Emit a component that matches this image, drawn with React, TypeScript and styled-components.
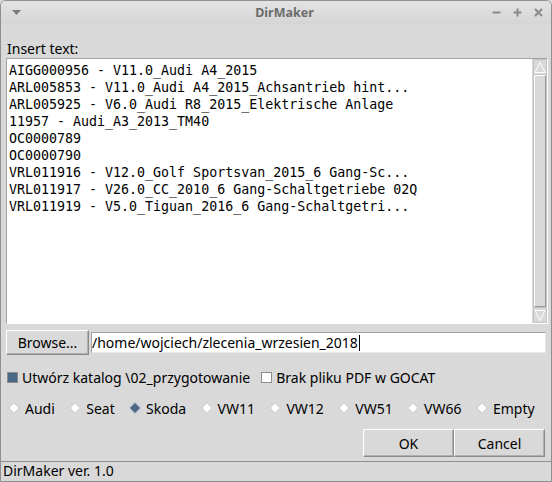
import React from "react";
import styled, { createGlobalStyle } from "styled-components";

const Global = createGlobalStyle`
  html, body { margin: 0; padding: 0; background: #d9d9d9; }
  body { width: 552px; height: 482px; overflow: hidden; }
`;

const UI = `"Noto Sans", "DejaVu Sans", sans-serif`;

const Window = styled.div`
  width: 552px;
  height: 482px;
  box-sizing: border-box;
  border: 1px solid #8f8f8f;
  border-radius: 6px 6px 0 0;
  overflow: hidden;
  display: flex;
  flex-direction: column;
  background: #d9d9d9;
  font-family: ${UI};
  font-size: 14px;
  color: #000;
`;

const TitleBar = styled.div`
  height: 23px;
  flex: none;
  display: grid;
  grid-template-columns: 1fr auto 1fr;
  align-items: center;
  background: linear-gradient(#e3e3e3, #d5d5d5);
  padding: 0 8px 0 11px;
`;

const Title = styled.div`
  font-family: ${UI};
  font-weight: bold;
  font-size: 12.5px;
  color: #6c6c6c;
  padding-left: 14px;
`;

const TitleButtons = styled.div`
  display: flex;
  justify-content: flex-end;
  align-items: center;
  gap: 12px;
`;

const Body = styled.div`
  flex: 1;
  display: flex;
  flex-direction: column;
  padding: 0 3px 0 5px;
`;

const Label = styled.div`
  margin-top: 15px;
  height: 19px;
  line-height: 19px;
  padding-left: 1px;
`;

const TextFrame = styled.div`
  height: 266px;
  display: flex;
  border: 1px solid #a3a3a3;
  border-right-color: #ffffff;
  border-bottom-color: #ffffff;
  box-sizing: border-box;
  background: #fff;
`;

const TextArea = styled.pre`
  flex: 1;
  margin: 0;
  padding: 3px 2px;
  font-family: "DejaVu Sans Mono", monospace;
  font-size: 13.3px;
  line-height: 17px;
  color: #000;
  background: #fff;
  overflow: hidden;
  white-space: pre;
`;

const ScrollBar = styled.div`
  width: 15px;
  flex: none;
  background: #c3c3c3;
  border-left: 1px solid #d9d9d9;
  display: flex;
  flex-direction: column;
  box-sizing: border-box;
  padding: 1px;
`;

const Arrow = styled.div`
  height: 14px;
  flex: none;
  background: #d9d9d9;
  display: flex;
  align-items: center;
  justify-content: center;
`;

const Thumb = styled.div`
  flex: 1;
  background: #d9d9d9;
  border: 1px solid #fff;
  border-right-color: #9a9a9a;
  border-bottom-color: #9a9a9a;
  margin: 1px 0;
`;

const BrowseRow = styled.div`
  display: flex;
  align-items: center;
  gap: 2px;
  margin-top: 6px;
  padding-right: 2px;
`;

const TkButton = styled.button<{ $w: number; $h: number }>`
  width: ${(p) => p.$w}px;
  height: ${(p) => p.$h}px;
  box-sizing: border-box;
  background: #d9d9d9;
  border: 1px solid;
  border-color: #ffffff #8a8a8a #8a8a8a #ffffff;
  box-shadow: inset -1px -1px 0 #b0b0b0;
  font-family: ${UI};
  font-size: 14px;
  color: #000;
  padding: 0;
  margin: 0;
`;

const Entry = styled.div`
  flex: 1;
  height: 21px;
  box-sizing: border-box;
  background: #fff;
  border: 1px solid #a3a3a3;
  border-right-color: #e8e8e8;
  border-bottom-color: #e8e8e8;
  line-height: 19px;
  padding-left: 0;
  display: flex;
  align-items: center;
`;

const Caret = styled.span`
  display: inline-block;
  width: 1px;
  height: 16px;
  background: #000;
  margin-left: 1px;
`;

const CheckRow = styled.div`
  display: flex;
  align-items: center;
  margin-top: 11px;
  height: 22px;
  padding-left: 1px;
`;

const CheckItem = styled.label<{ $gap?: number }>`
  display: flex;
  align-items: center;
  gap: 4px;
  margin-right: ${(p) => p.$gap ?? 0}px;
`;

const Box = styled.span<{ $on?: boolean }>`
  width: 11px;
  height: 11px;
  box-sizing: border-box;
  border: 1px solid #8c8c8c;
  background: ${(p) => (p.$on ? "#4a6984" : "#ffffff")};
`;

const RadioRow = styled.div`
  display: flex;
  align-items: center;
  margin-top: 9px;
  height: 22px;
  padding-left: 2px;
`;

const RadioItem = styled.label`
  display: flex;
  align-items: center;
  gap: 5px;
  margin-right: 14.4px;
`;

const ButtonRow = styled.div`
  display: flex;
  justify-content: flex-end;
  margin-top: 10px;
  padding-right: 3px;
  gap: 0;
`;

const StatusBar = styled.div`
  height: 20px;
  flex: none;
  margin-top: auto;
  box-sizing: border-box;
  border-top: 1px solid #8f8f8f;
  border-left: 1px solid #8f8f8f;
  padding-left: 2px;
  line-height: 18px;
  font-size: 14px;
  margin-left: -1px;
  margin-right: -1px;
`;

const Diamond = ({ on }: { on?: boolean }) => (
  <svg width="12" height="12" viewBox="0 0 12 12">
    <path d="M6 0.8 L11.2 6 L6 11.2 L0.8 6 Z" fill={on ? "#4a6984" : "#ffffff"} stroke={on ? "#8a9bb0" : "#c8c8c8"} strokeWidth="1" />
  </svg>
);

const ArrowIcon = ({ up }: { up?: boolean }) => (
  <svg width="13" height="13" viewBox="0 0 13 13">
    {up ? (
      <path d="M6.5 1 L12 12 L1 12 Z" fill="#d9d9d9" stroke="#ffffff" strokeWidth="1" />
    ) : (
      <path d="M1 1 L12 1 L6.5 12 Z" fill="#d9d9d9" stroke="#ffffff" strokeWidth="1" />
    )}
  </svg>
);

const lines = [
  "AIGG000956 - V11.0_Audi A4_2015",
  "ARL005853 - V11.0_Audi A4_2015_Achsantrieb hint...",
  "ARL005925 - V6.0_Audi R8_2015_Elektrische Anlage",
  "11957 - Audi_A3_2013_TM40",
  "OC0000789",
  "OC0000790",
  "VRL011916 - V12.0_Golf Sportsvan_2015_6 Gang-Sc...",
  "VRL011917 - V26.0_CC_2010_6 Gang-Schaltgetriebe 02Q",
  "VRL011919 - V5.0_Tiguan_2016_6 Gang-Schaltgetri...",
];

const radios = ["Audi", "Seat", "Skoda", "VW11", "VW12", "VW51", "VW66", "Empty"];

export default function App() {
  return (
    <>
      <Global />
      <Window>
        <TitleBar>
          <svg width="9" height="6" viewBox="0 0 9 6">
            <path d="M0 0 L9 0 L4.5 5 Z" fill="#7b7b7b" />
          </svg>
          <Title>DirMaker</Title>
          <TitleButtons>
            <svg width="9" height="9" viewBox="0 0 9 9">
              <path d="M0.5 4.5 H8.5" stroke="#8a8a8a" strokeWidth="2" />
            </svg>
            <svg width="9" height="9" viewBox="0 0 9 9">
              <path d="M0.5 4.5 H8.5 M4.5 0.5 V8.5" stroke="#8a8a8a" strokeWidth="2" />
            </svg>
            <svg width="9" height="9" viewBox="0 0 9 9">
              <path d="M1 1 L8 8 M8 1 L1 8" stroke="#8a8a8a" strokeWidth="2" />
            </svg>
          </TitleButtons>
        </TitleBar>
        <Body>
          <Label>Insert text:</Label>
          <TextFrame>
            <TextArea>{lines.join("\n")}</TextArea>
            <ScrollBar>
              <Arrow>
                <ArrowIcon up />
              </Arrow>
              <Thumb />
              <Arrow>
                <ArrowIcon />
              </Arrow>
            </ScrollBar>
          </TextFrame>
          <BrowseRow>
            <TkButton $w={83} $h={25}>Browse...</TkButton>
            <Entry>
              /home/wojciech/zlecenia_wrzesien_2018
              <Caret />
            </Entry>
          </BrowseRow>
          <CheckRow>
            <CheckItem $gap={11}>
              <Box $on />
              Utwórz katalog \02_przygotowanie
            </CheckItem>
            <CheckItem>
              <Box />
              Brak pliku PDF w GOCAT
            </CheckItem>
          </CheckRow>
          <RadioRow>
            {radios.map((r) => (
              <RadioItem key={r}>
                <Diamond on={r === "Skoda"} />
                {r}
              </RadioItem>
            ))}
          </RadioRow>
          <ButtonRow>
            <TkButton $w={91} $h={28}>OK</TkButton>
            <TkButton $w={91} $h={28}>Cancel</TkButton>
          </ButtonRow>
        </Body>
        <StatusBar>DirMaker ver. 1.0</StatusBar>
      </Window>
    </>
  );
}
